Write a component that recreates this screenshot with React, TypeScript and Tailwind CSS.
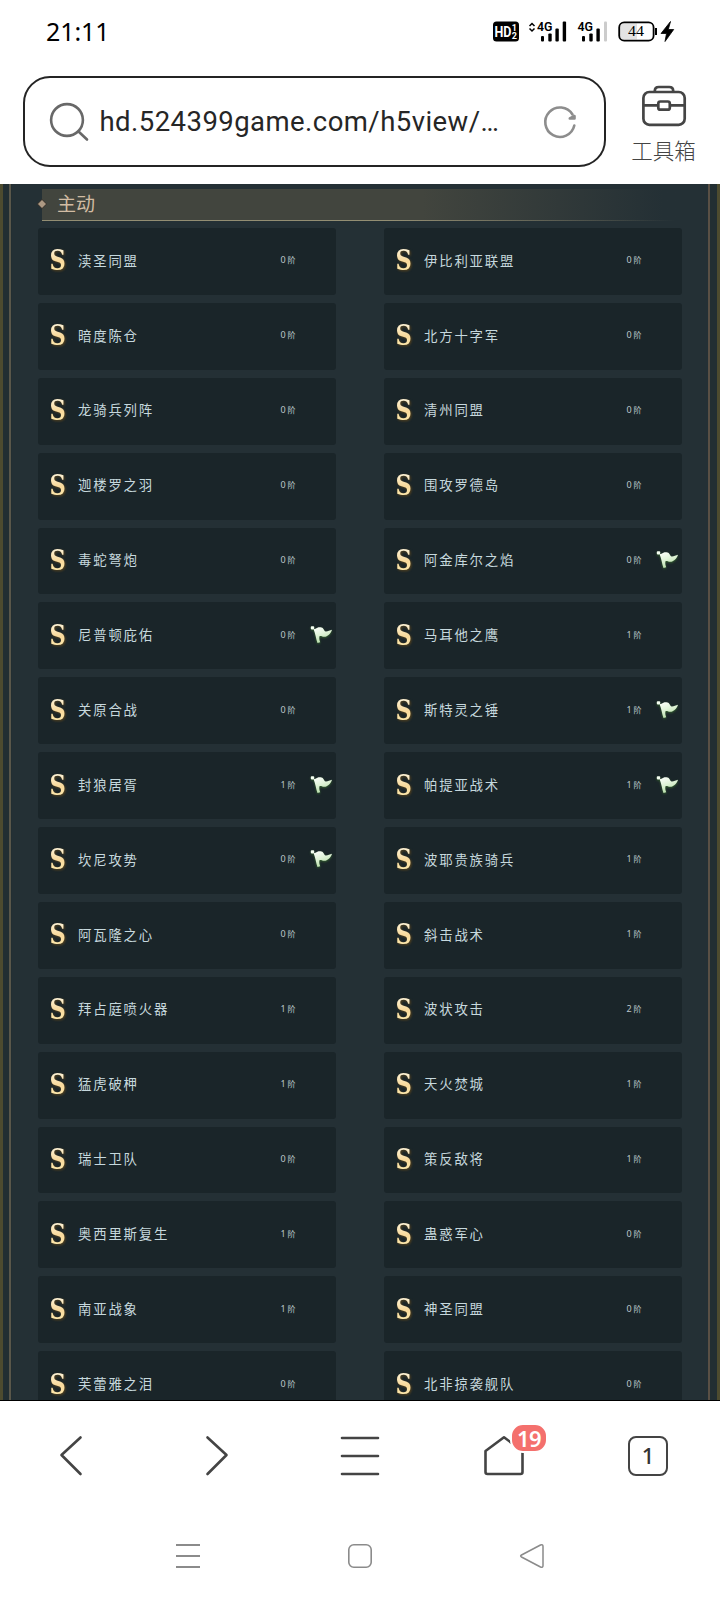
type Skill = { name: string; rank: number; flag?: boolean };

const skills: Skill[] = [
  { name: "渎圣同盟", rank: 0 }, { name: "伊比利亚联盟", rank: 0 },
  { name: "暗度陈仓", rank: 0 }, { name: "北方十字军", rank: 0 },
  { name: "龙骑兵列阵", rank: 0 }, { name: "清州同盟", rank: 0 },
  { name: "迦楼罗之羽", rank: 0 }, { name: "围攻罗德岛", rank: 0 },
  { name: "毒蛇弩炮", rank: 0 }, { name: "阿金库尔之焰", rank: 0, flag: true },
  { name: "尼普顿庇佑", rank: 0, flag: true }, { name: "马耳他之鹰", rank: 1 },
  { name: "关原合战", rank: 0 }, { name: "斯特灵之锤", rank: 1, flag: true },
  { name: "封狼居胥", rank: 1, flag: true }, { name: "帕提亚战术", rank: 1, flag: true },
  { name: "坎尼攻势", rank: 0, flag: true }, { name: "波耶贵族骑兵", rank: 1 },
  { name: "阿瓦隆之心", rank: 0 }, { name: "斜击战术", rank: 1 },
  { name: "拜占庭喷火器", rank: 1 }, { name: "波状攻击", rank: 2 },
  { name: "猛虎破柙", rank: 1 }, { name: "天火焚城", rank: 1 },
  { name: "瑞士卫队", rank: 0 }, { name: "策反敌将", rank: 1 },
  { name: "奥西里斯复生", rank: 1 }, { name: "蛊惑军心", rank: 0 },
  { name: "南亚战象", rank: 1 }, { name: "神圣同盟", rank: 0 },
  { name: "芙蕾雅之泪", rank: 0 }, { name: "北非掠袭舰队", rank: 0 },
];

function StatusBar() {
  return (
    <div className="flex h-[76px] shrink-0 items-start justify-between pl-[46px] pr-[44px] text-black">
      <span className="mt-[13px] font-[family-name:'Noto_Sans'] text-[25px] leading-[36px] tracking-[-0.1px]">21:11</span>
      <svg className="mt-[20px]" width="184" height="24" viewBox="492 20.500 184 24">
        <rect x="493" y="22" width="26" height="20" rx="3.5" fill="#000" />
        <g fill="#fff" fontFamily="Roboto" fontWeight="700">
          <text x="494.5" y="37.3" fontSize="15" textLength="17" lengthAdjust="spacingAndGlyphs">HD</text>
          <text x="511.8" y="31.5" fontSize="9">1</text>
          <text x="511.8" y="39.5" fontSize="9">2</text>
        </g>
        <path d="M529.500 26.500l2.500-2.500 2.500 2.500M529.500 29l2.500 2.500 2.500-2.500" fill="none" stroke="#000" strokeWidth="1.500" />
        <g fontFamily="Roboto" fontWeight="600" fontSize="12.5">
          <text x="537" y="31.6" textLength="15.5" lengthAdjust="spacingAndGlyphs">4G</text>
          <text x="577.5" y="31.6" textLength="15.5" lengthAdjust="spacingAndGlyphs">4G</text>
        </g>
        <g fill="#000">
          <rect x="541" y="36.5" width="3" height="5.5" rx="1" />
          <rect x="548.3" y="34" width="3.4" height="8" rx="1" />
          <rect x="555.4" y="29" width="3.4" height="13" rx="1" />
          <rect x="562.700" y="22" width="3.4" height="20" rx="1" />
          <rect x="582" y="36.5" width="3" height="5.5" rx="1" />
          <rect x="589.3" y="34" width="3.4" height="8" rx="1" />
          <rect x="596.4" y="29" width="3.4" height="13" rx="1" />
        </g>
        <rect x="604" y="22" width="3" height="20" rx="1" fill="#ccc" />
        <path d="M623 24h14v16h-14q-3 0-3-4v-8q0-4 3-4z" fill="#e3e3e3" />
        <rect x="619.2" y="22.9" width="34.4" height="18.3" rx="5" fill="none" stroke="#000" strokeWidth="1.8" />
        <rect x="655" y="28.5" width="2" height="7" fill="#000" />
        <text x="628" y="36.8" fontFamily="Liberation Serif" fontSize="15" textLength="16" lengthAdjust="spacingAndGlyphs">44</text>
        <path d="M670.500 22l-9.500 12h5.500l-1.500 8 8.700-12h-5.400z" fill="#000" stroke="#000" strokeWidth="0.800" />
      </svg>
    </div>
  );
}

function AddressBar() {
  return (
    <div className="flex h-[108px] shrink-0 items-start pl-[22.5px]">
      <div className="flex h-[91px] w-[583px] shrink-0 items-center rounded-[27px] border-[2.5px] border-[#242424] pl-[24px]">
        <svg width="42" height="42" viewBox="49 102 42 42" fill="none" stroke="#686868" strokeWidth="2.6" strokeLinecap="round">
          <circle cx="67" cy="121" r="15.9" />
          <path d="M78.5 132.5l8.5 8" />
        </svg>
        <span className="ml-[9px] w-[402px] whitespace-nowrap font-[family-name:'Roboto'] text-[27.5px] leading-[36px] tracking-[0.45px] text-[#262626]">hd.524399game.com/h5view/…</span>
        <svg className="ml-[39px]" width="38" height="38" viewBox="541 103 38 38" fill="none" stroke="#8d8d8d" strokeWidth="2.6" strokeLinecap="round" strokeLinejoin="round">
          <path d="M574.3 125.5A14.7 14.7 0 1 1 572.5 114.5" />
          <path d="M574.500 116v2.400h-4.7z" fill="#8d8d8d" />
        </svg>
      </div>
      <div className="ml-[23.500px] flex w-[69px] flex-col items-center">
        <svg className="mt-[8px]" width="46" height="44" viewBox="641 84 46 44" fill="none" stroke="#454545" strokeWidth="2.7" strokeLinejoin="round">
          <rect x="643.4" y="92" width="41.3" height="32.8" rx="6" />
          <path d="M654.8 92v-1q0-4 4-4h10.4q4 0 4 4v1M643.5 105.3h14.7M670 105.3h14.5" />
          <rect x="658.3" y="101.5" width="11.5" height="8.2" rx="2" />
        </svg>
        <span className="mt-[7px] whitespace-nowrap font-[family-name:'Noto_Sans_CJK_SC',sans-serif] text-[21.5px] font-light leading-[30px] text-[#444]">工具箱</span>
      </div>
    </div>
  );
}

function Flag() {
  return (
    <svg width="24" height="22" viewBox="0 0 24 22" className="drop-shadow-[0_1px_1px_#35612f]">
      <defs>
        <linearGradient id="flagFill" x1="0" y1="0" x2="0.4" y2="1">
          <stop offset="0" stopColor="#fff" />
          <stop offset="0.5" stopColor="#e0f3d8" />
          <stop offset="1" stopColor="#b5dda7" />
        </linearGradient>
      </defs>
      <rect x="0.800" y="1.2" width="3.4" height="3.200" rx="0.8" fill="#f5fff2" />
      <path d="M3.600 4.200L5.500 3.800C7 2.600 8.500 1.900 10.500 2.200C13.500 2.500 13.800 5 15 6.300C17 7.200 19.500 5 22 4.700C20.800 8.500 17.500 11.800 14.300 11.800C12.500 11.800 10.800 10.600 9.500 11.200C8.900 13 9.500 15.200 10.200 17.300L7.500 18.100C6 13.500 5.300 8.500 3.600 4.200z" fill="url(#flagFill)" />
    </svg>
  );
}

function SkillCard({ name, rank, flag }: Skill) {
  return (
    <div className="flex h-[66.88px] items-center rounded-[3px] bg-[#1a2529] pl-[11px]">
      <span className="w-[17px] scale-x-95 scale-y-105 bg-linear-to-b from-[#fffbe9] via-[#f8d99b] to-[#fff2b8] bg-clip-text font-[family-name:'DejaVu_Serif_Condensed','DejaVu_Serif',serif] text-[26.500px] font-bold leading-[30px] text-transparent drop-shadow-[1px_1px_1px_#5a451d]">S</span>
      <span className="mb-[3.500px] ml-[12px] w-[202.500px] whitespace-nowrap font-[family-name:'Noto_Sans_CJK_SC',sans-serif] text-[13.4px] leading-[20px] tracking-[1.800px] text-[#c6d8dd]">{name}</span>
      <span className="mb-[2px] flex w-[29.500px] items-center text-[#bcc7cb]">
        <span className="w-[7px] font-[family-name:'Noto_Sans'] text-[9px] leading-[12px]">{rank}</span>
        <span className="font-[family-name:'Noto_Sans_CJK_SC',sans-serif] text-[8px] leading-[12px]">阶</span>
      </span>
      {flag && <Flag />}
    </div>
  );
}

function GamePanel() {
  return (
    <main className="flex h-[1217px] shrink-0 overflow-hidden border-b border-black bg-[#243035]">
      <div className="flex w-[12px] shrink-0 bg-[#222e32]">
        <div className="w-[3px] bg-[#4d4b2f]" />
        <div className="ml-[6px] w-[2px] bg-[#5a574a]" />
      </div>
      <div className="ml-[26px] w-[644px] shrink-0">
        <div className="flex h-[44px] pt-[5px]">
          <div className="relative ml-[4px] h-[32px] w-[634px] bg-linear-to-r from-[#42453e] from-60% to-[#243035] to-98%">
            <div className="absolute bottom-0 left-0 h-px w-full bg-linear-to-r from-[#938e73] from-55% to-transparent" />
            <svg className="absolute -left-[5px] top-[9px]" width="12" height="12" viewBox="0 0 12 12">
              <path d="M5 1l5 5-5 5-5-5z" fill="#3d352d" />
              <path d="M5 2l4 4-4 4L1 6z" fill="#ad9983" />
            </svg>
            <h1 className="ml-[15px] font-[family-name:'Noto_Sans_CJK_SC',sans-serif] text-[19px] leading-[27px] text-[#d2bca3]">主动</h1>
          </div>
        </div>
        <div className="grid grid-cols-[298px_298px] justify-between gap-y-[8px]">
          {skills.map((skill) => (
            <SkillCard key={skill.name} {...skill} />
          ))}
        </div>
      </div>
      <div className="ml-auto flex w-[12px] shrink-0 bg-[#222e32]">
        <div className="w-[2px] bg-[#5a5045]" />
        <div className="ml-[7px] w-[3px] bg-[#4d4b2f]" />
      </div>
    </main>
  );
}

function BrowserNav() {
  return (
    <nav className="grid h-[111px] shrink-0 grid-cols-5 items-center justify-items-center pb-px">
      <svg width="44" height="44" viewBox="0 0 44 44" fill="none" stroke="#444" strokeWidth="2.6" strokeLinecap="round" strokeLinejoin="round"><path d="M30.500 3.500L11.500 21l19 19" /></svg>
      <svg width="44" height="44" viewBox="0 0 44 44" fill="none" stroke="#444" strokeWidth="2.6" strokeLinecap="round" strokeLinejoin="round"><path d="M13.500 3.500L32.500 21l-19 19" /></svg>
      <svg width="44" height="44" viewBox="0 0 44 44" fill="none" stroke="#444" strokeWidth="2.6" strokeLinecap="round"><path d="M4 4h36M4 22h36M4 40h36" /></svg>
      <div className="relative">
        <svg width="44" height="44" viewBox="0 0 44 44" fill="none" stroke="#444" strokeWidth="2.6" strokeLinejoin="round"><path d="M3.500 17L22 3.300l18.500 13.700v21q0 2-2 2h-33q-2 0-2-2z" /></svg>
        <span className="absolute -top-[11px] left-[28px] flex h-[30px] w-[38px] items-center justify-center rounded-[13px] border-2 border-white bg-[#f4706d] pb-px font-[family-name:'Noto_Sans'] text-[22px] font-semibold leading-none tracking-[-0.500px] text-white">19</span>
      </div>
      <div className="flex size-[40px] items-center justify-center rounded-[8px] border-[2.500px] border-[#444] pb-[2px] font-[family-name:'Noto_Sans'] text-[22px] font-medium leading-none text-[#333]">1</div>
    </nav>
  );
}

function SystemNav() {
  return (
    <div className="flex h-[88px] shrink-0 items-center justify-center gap-[146px]">
      <svg width="26" height="26" viewBox="0 0 26 26" stroke="#8b8b8b" strokeWidth="1.800"><path d="M1 2h24M1 13h24M1 24h24" /></svg>
      <svg width="26" height="26" viewBox="0 0 26 26" fill="none" stroke="#8b8b8b" strokeWidth="1.600"><rect x="1.800" y="1.800" width="22.400" height="22.400" rx="5" /></svg>
      <svg width="26" height="26" viewBox="0 0 26 26" fill="none" stroke="#8b8b8b" strokeWidth="1.500" strokeLinejoin="round"><path d="M2.500 12L21.500 2q2.500-1 2.500 1.500v19q0 2.500-2.500 1.500l-19-10q-1.700-1 0-2z" /></svg>
    </div>
  );
}

export default function App() {
  return (
    <div className="flex h-[1600px] w-[720px] flex-col overflow-hidden bg-white">
      <StatusBar />
      <AddressBar />
      <GamePanel />
      <BrowserNav />
      <SystemNav />
    </div>
  );
}
